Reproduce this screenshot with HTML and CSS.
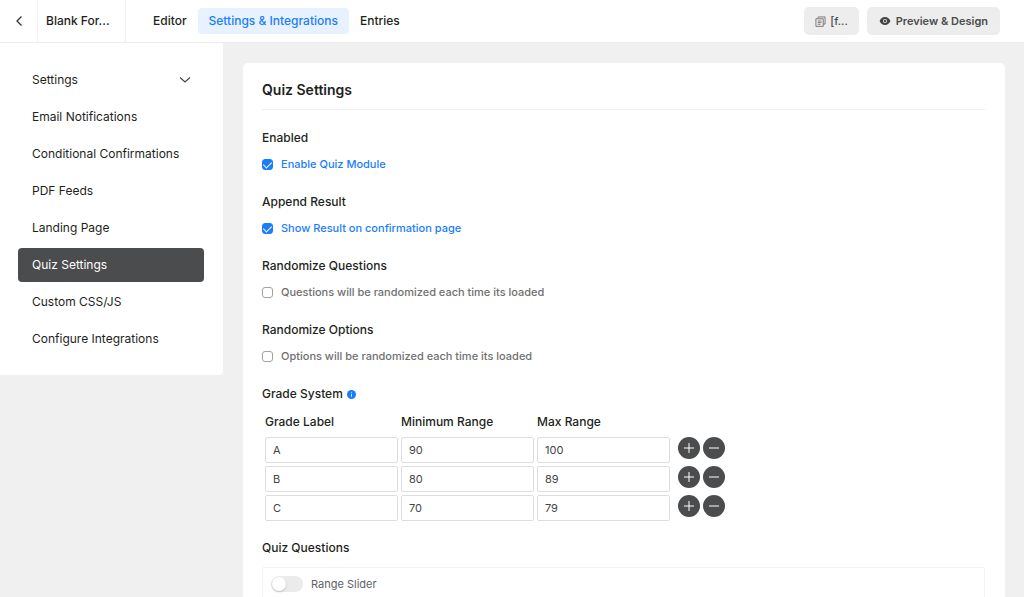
FILE: index.html
```html
<!DOCTYPE html>
<html lang="en">
<head>
    <meta charset="UTF-8">
    <meta name="viewport" content="width=device-width, initial-scale=1.0">
    <title>Quiz Settings</title>
    <link rel="stylesheet" href="styles.css">
</head>
<body>
    <header class="topbar">
        <a href="#" class="back" aria-label="Back">
            <svg width="12" height="12" viewBox="0 0 12 12" fill="none" stroke="#333" stroke-width="1.3"><path d="M8.500 1.500 4 6 8.500 10.500"/></svg>
        </a>
        <div class="form-name">Blank For...</div>
        <nav class="tabs">
            <a href="#">Editor</a>
            <a href="#" class="active">Settings &amp; Integrations</a>
            <a href="#">Entries</a>
        </nav>
        <div class="top-actions">
            <button type="button" class="btn btn-code">
                <svg width="11" height="11" viewBox="0 0 12 12" fill="none" stroke="#666" stroke-width="0.9"><path d="M3.500 2.700V1h7.500v7.800H9.300M1 3h8v8.300H1zM3 5.500h4M3 7.200h4M3 9h3"/></svg>
                [f...
            </button>
            <button type="button" class="btn btn-preview">
                <svg width="12" height="12" viewBox="0 0 12 12"><path fill="#444" fill-rule="evenodd" d="M6 2C3.300 2 1.300 4 .6 6 1.300 8 3.300 10 6 10s4.700-2 5.400-4C10.700 4 8.700 2 6 2zm0 2a2 2 0 1 1 0 4 2 2 0 0 1 0-4z"/><circle cx="6" cy="6" r="1.200" fill="#444"/></svg>
                Preview &amp; Design
            </button>
        </div>
    </header>
    <div class="layout">
        <aside class="sidebar">
            <a href="#">Settings
                <svg width="12" height="12" viewBox="0 0 12 12" fill="none" stroke="#444" stroke-width="1.2"><path d="M1 3.500 6 8 11 3.500"/></svg>
            </a>
            <a href="#">Email Notifications</a>
            <a href="#">Conditional Confirmations</a>
            <a href="#">PDF Feeds</a>
            <a href="#">Landing Page</a>
            <a href="#" class="active">Quiz Settings</a>
            <a href="#">Custom CSS/JS</a>
            <a href="#">Configure Integrations</a>
        </aside>
        <main class="card">
            <h1>Quiz Settings</h1>
            <div class="field">
                <h2>Enabled</h2>
                <label class="check"><input type="checkbox" checked><span>Enable Quiz Module</span></label>
            </div>
            <div class="field">
                <h2>Append Result</h2>
                <label class="check"><input type="checkbox" checked><span>Show Result on confirmation page</span></label>
            </div>
            <div class="field">
                <h2>Randomize Questions</h2>
                <label class="check"><input type="checkbox"><span>Questions will be randomized each time its loaded</span></label>
            </div>
            <div class="field">
                <h2>Randomize Options</h2>
                <label class="check"><input type="checkbox"><span>Options will be randomized each time its loaded</span></label>
            </div>
            <div class="grades">
                <h2>Grade System
                    <svg width="9" height="9" viewBox="0 0 9 9"><circle cx="4.500" cy="4.500" r="4.500" fill="#1a7efb"/><path d="M4.500 4v2.800M4.500 2.200v1" stroke="#fff" stroke-width="0.800"/></svg>
                </h2>
                <table>
                    <thead>
                        <tr><th>Grade Label</th><th>Minimum Range</th><th>Max Range</th><td></td></tr>
                    </thead>
                    <tbody>
                        <tr>
                            <td><input type="text" value="A" aria-label="Grade label"></td>
                            <td><input type="text" value="90" aria-label="Minimum range"></td>
                            <td><input type="text" value="100" aria-label="Max range"></td>
                            <td class="row-actions">
                                <button type="button" aria-label="Add"><svg width="12" height="12" viewBox="0 0 12 12" stroke="#fff"><path d="M1 6h10M6 1v10"/></svg></button>
                                <button type="button" aria-label="Remove"><svg width="12" height="12" viewBox="0 0 12 12" stroke="#fff"><path d="M1 6h10"/></svg></button>
                            </td>
                        </tr>
                        <tr>
                            <td><input type="text" value="B" aria-label="Grade label"></td>
                            <td><input type="text" value="80" aria-label="Minimum range"></td>
                            <td><input type="text" value="89" aria-label="Max range"></td>
                            <td class="row-actions">
                                <button type="button" aria-label="Add"><svg width="12" height="12" viewBox="0 0 12 12" stroke="#fff"><path d="M1 6h10M6 1v10"/></svg></button>
                                <button type="button" aria-label="Remove"><svg width="12" height="12" viewBox="0 0 12 12" stroke="#fff"><path d="M1 6h10"/></svg></button>
                            </td>
                        </tr>
                        <tr>
                            <td><input type="text" value="C" aria-label="Grade label"></td>
                            <td><input type="text" value="70" aria-label="Minimum range"></td>
                            <td><input type="text" value="79" aria-label="Max range"></td>
                            <td class="row-actions">
                                <button type="button" aria-label="Add"><svg width="12" height="12" viewBox="0 0 12 12" stroke="#fff"><path d="M1 6h10M6 1v10"/></svg></button>
                                <button type="button" aria-label="Remove"><svg width="12" height="12" viewBox="0 0 12 12" stroke="#fff"><path d="M1 6h10"/></svg></button>
                            </td>
                        </tr>
                    </tbody>
                </table>
            </div>
            <h2>Quiz Questions</h2>
            <div class="questions">
                <label class="switch"><input type="checkbox"><span>Range Slider</span></label>
            </div>
        </main>
    </div>
</body>
</html>
```

FILE: styles.css
```css
* {
    box-sizing: border-box;
}
body {
    margin: 0;
    background-color: #f0f0f0;
    color: #1e1f21;
    font-family: Inter, "Liberation Sans", sans-serif;
    font-size: 12px;
    line-height: 20px;
}
a {
    color: inherit;
    text-decoration: none;
}
button, input {
    font-family: inherit;
    margin: 0;
}
svg {
    flex-shrink: 0;
}
.topbar {
    display: flex;
    height: 43px;
    background-color: #fff;
    border-bottom: 1px solid #ececec;
    font-weight: 500;
}
.back {
    display: flex;
    align-items: center;
    justify-content: center;
    width: 38px;
    border-right: 1px solid #f2f2f2;
}
.form-name {
    display: flex;
    align-items: center;
    width: 88px;
    padding-left: 8px;
    border-right: 1px solid #f0f0f0;
    white-space: nowrap;
}
.tabs {
    display: flex;
    align-items: center;
    padding-left: 16px;
}
.tabs a {
    padding: 3px 11px;
    border-radius: 4px;
    white-space: nowrap;
}
.tabs .active {
    background-color: #e8f2ff;
    color: #1a7efb;
}
.top-actions {
    display: flex;
    align-items: center;
    gap: 8px;
    margin-left: auto;
    padding-right: 24px;
}
.btn {
    display: flex;
    align-items: center;
    gap: 5px;
    height: 28px;
    padding: 0 12px;
    border: none;
    border-radius: 5px;
    background-color: #ededed;
    color: #4b4c4d;
    font-size: 11px;
    font-weight: 600;
    cursor: pointer;
}
.btn-code {
    gap: 4px;
    padding: 0 11px;
    font-weight: 500;
}
.layout {
    display: flex;
    align-items: flex-start;
}
.sidebar {
    display: flex;
    flex-direction: column;
    gap: 3px;
    flex-shrink: 0;
    width: 223px;
    padding: 20px 19px 19px 18px;
    background-color: #fff;
    border-radius: 0 0 4px 0;
}
.sidebar a {
    display: flex;
    align-items: center;
    justify-content: space-between;
    height: 34px;
    padding: 0 13px 0 14px;
    border-radius: 4px;
    white-space: nowrap;
}
.sidebar .active {
    background-color: #4b4c4d;
    color: #fff;
}
.card {
    flex: 1;
    margin: 20px 19px 0 20px;
    padding: 17px 20px 20px 19px;
    background-color: #fff;
    border-radius: 5px;
}
h1 {
    margin: 0 0 18px;
    padding-bottom: 9px;
    border-bottom: 1px solid #f0f0f0;
    font-size: 14px;
    font-weight: 600;
    line-height: 20px;
}
h2 {
    display: flex;
    align-items: center;
    gap: 4px;
    margin: 0;
    font-size: 12px;
    font-weight: 500;
    line-height: 20px;
}
.field {
    margin-bottom: 18px;
}
.check {
    display: flex;
    align-items: center;
    gap: 8px;
    margin-top: 6px;
    color: #6f7073;
    font-size: 11px;
    font-weight: 500;
}
.check input {
    appearance: none;
    width: 11px;
    height: 11px;
    border: 1px solid #a0a0a0;
    border-radius: 3px;
    background-color: #fff;
}
.check input:checked {
    display: flex;
    justify-content: center;
    border-color: #1a7efb;
    background-color: #1a7efb;
}
.check input:checked::after {
    content: "";
    width: 4px;
    height: 7px;
    border: solid #fff;
    border-width: 0 1px 1px 0;
    transform: rotate(45deg);
}
.check input:checked + span {
    color: #1a7efb;
}
.grades {
    margin-bottom: 14px;
}
table {
    margin-top: 4px;
    border-spacing: 3px;
}
th, td {
    padding: 0;
}
th {
    height: 23px;
    padding-bottom: 2px;
    font-weight: 500;
    text-align: left;
}
td input {
    display: block;
    width: 133px;
    height: 26px;
    padding: 0 7px;
    border: 1px solid #dedede;
    border-radius: 2px;
    color: #444;
    font-size: 11px;
}
.row-actions {
    display: flex;
    gap: 3px;
    padding-left: 5px;
}
.row-actions button {
    display: flex;
    align-items: center;
    justify-content: center;
    width: 22px;
    height: 22px;
    padding: 0;
    border: none;
    border-radius: 50%;
    background-color: #4b4c4d;
    cursor: pointer;
}
.questions {
    margin-top: 9px;
    padding: 6px 8px 24px;
    border: 1px solid #f2f2f2;
    border-radius: 2px;
}
.switch {
    display: flex;
    align-items: center;
    gap: 8px;
    color: #606266;
    font-size: 11px;
}
.switch input {
    appearance: none;
    display: flex;
    width: 32px;
    height: 16px;
    border-radius: 8px;
    background-color: #ebebeb;
}
.switch input::before {
    content: "";
    width: 14px;
    height: 14px;
    margin: 1px;
    border-radius: 50%;
    background-color: #fff;
    box-shadow: 0 1px 2px rgba(0, 0, 0, 0.2);
}
.switch input:checked {
    justify-content: flex-end;
    background-color: #1a7efb;
}
```
